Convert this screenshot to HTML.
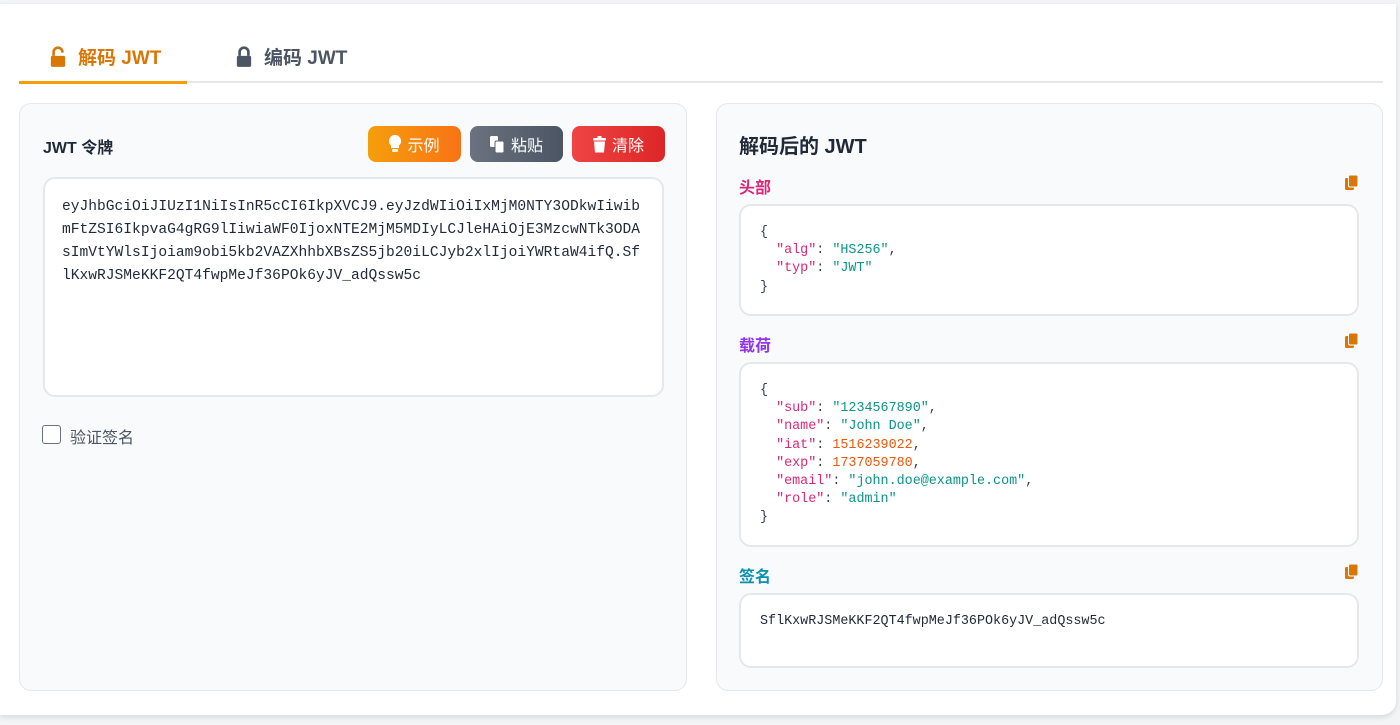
<!DOCTYPE html>
<html><head><meta charset="utf-8"><style>
*{box-sizing:border-box;margin:0;padding:0}
body{width:1400px;height:725px;background:#f3f4f6;font-family:"Liberation Sans","Noto Sans CJK SC",sans-serif;position:relative;overflow:hidden}
.wrap{position:absolute;left:0;top:4px;width:1396px;height:711px;background:#fff;border-radius:0 0 14px 0;box-shadow:0 2px 6px rgba(0,0,0,.12)}
.tabs{position:absolute;left:19px;top:81px;width:1364px;height:2px;background:#e5e7eb}
.tab{position:absolute;top:43px;font-size:19px;font-weight:bold;display:flex;align-items:center;gap:12px}
.ul{position:absolute;left:19px;top:81px;width:168px;height:3px;background:#f59e0b}
.panel{position:absolute;top:103px;height:588px;background:#f8fafc;border:1px solid #e5e7eb;border-radius:12px}
.btn{position:absolute;top:126px;height:36px;border-radius:8px;color:#fff;font-size:16px;display:flex;align-items:center;justify-content:center;gap:6px}
.ta{position:absolute;left:43px;top:177px;width:621px;height:220px;background:#fff;border:2px solid #e5e7eb;border-radius:12px;padding:17px 17px;font-family:"Liberation Mono",monospace;font-size:14.6px;line-height:23px;color:#1f2937;white-space:nowrap;letter-spacing:0}
.lab{position:absolute;left:739px;font-size:16px;font-weight:bold}
.cp{position:absolute;left:1345px}
.box{position:absolute;left:739px;width:620px;background:#fff;border:2px solid #e5e7eb;border-radius:12px;padding:18px 19px;font-family:"Liberation Mono",monospace;font-size:13.4px;line-height:18.2px;color:#374151;white-space:pre}
.k{color:#db2777}.s{color:#0d9488}.n{color:#ea580c}
</style></head><body>
<div class="wrap"></div>
<div class="tabs"></div><div class="ul"></div>
<div class="tab" style="left:50px;color:#d97706"><svg width="16" height="22" viewBox="0 0 14 20"><path d="M3 9V5.5a4 4 0 0 1 8 0V6" fill="none" stroke="#d97706" stroke-width="2.4"/><rect x="0.5" y="9" width="13" height="10" rx="1.5" fill="#d97706"/></svg>解码 JWT</div>
<div class="tab" style="left:236px;color:#4b5563"><svg width="16" height="22" viewBox="0 0 14 20"><path d="M3 9V5.5a4 4 0 0 1 8 0V9" fill="none" stroke="#4b5563" stroke-width="2.4"/><rect x="0.5" y="9" width="13" height="10" rx="1.5" fill="#4b5563"/></svg>编码 JWT</div>

<div class="panel" style="left:19px;width:668px"></div>
<div class="panel" style="left:716px;width:667px"></div>

<div style="position:absolute;left:43px;top:134px;font-size:16px;font-weight:bold;color:#1f2937">JWT 令牌</div>
<div class="btn" style="left:368px;width:93px;background:linear-gradient(90deg,#f59e0b,#f97316)"><svg width="12" height="18" viewBox="0 0 12 18"><path d="M6 0a6 6 0 0 0-4 10.5V13h8v-2.5A6 6 0 0 0 6 0z" fill="#fff"/><rect x="3" y="14" width="6" height="3" rx="1.2" fill="#fff"/></svg>示例</div>
<div class="btn" style="left:470px;width:93px;background:linear-gradient(90deg,#6b7280,#4b5563)"><svg width="15" height="17" viewBox="0 0 15 17"><rect x="0" y="0" width="8" height="11" rx="1.5" fill="#fff"/><rect x="5" y="5" width="9" height="12" rx="1.5" fill="#fff" stroke="#5b6270" stroke-width="1"/></svg>粘贴</div>
<div class="btn" style="left:572px;width:93px;background:linear-gradient(90deg,#ef4444,#dc2626)"><svg width="13" height="17" viewBox="0 0 13 17"><rect x="0" y="2" width="13" height="2.5" rx="1" fill="#fff"/><rect x="4.5" y="0" width="4" height="2" fill="#fff"/><path d="M1 5.5h11l-1 11H2z" fill="#fff"/></svg>清除</div>

<div class="ta">eyJhbGciOiJIUzI1NiIsInR5cCI6IkpXVCJ9.eyJzdWIiOiIxMjM0NTY3ODkwIiwib<br>mFtZSI6IkpvaG4gRG9lIiwiaWF0IjoxNTE2MjM5MDIyLCJleHAiOjE3MzcwNTk3ODA<br>sImVtYWlsIjoiam9obi5kb2VAZXhhbXBsZS5jb20iLCJyb2xlIjoiYWRtaW4ifQ.Sf<br>lKxwRJSMeKKF2QT4fwpMeJf36POk6yJV_adQssw5c</div>
<div style="position:absolute;left:42px;top:425px;width:19px;height:19px;border:1.5px solid #6b7280;border-radius:3px;background:#fff"></div>
<div style="position:absolute;left:70px;top:424px;font-size:16px;color:#4b5563">验证签名</div>

<div style="position:absolute;left:739px;top:130px;font-size:20px;font-weight:bold;color:#1f2937">解码后的 JWT</div>

<div class="lab" style="top:174px;color:#db2777">头部</div>
<svg class="cp" style="top:175px" width="13" height="15" viewBox="0 0 13 15"><rect x="0" y="3" width="9" height="12" rx="1.5" fill="#d97706"/><rect x="3.5" y="0" width="9.5" height="12" rx="1.5" fill="#d97706" stroke="#fff" stroke-width="1"/></svg>
<div class="box" style="top:204px;height:112px">{
  <span class="k">"alg"</span>: <span class="s">"HS256"</span>,
  <span class="k">"typ"</span>: <span class="s">"JWT"</span>
}</div>

<div class="lab" style="top:332px;color:#9333ea">载荷</div>
<svg class="cp" style="top:333px" width="13" height="15" viewBox="0 0 13 15"><rect x="0" y="3" width="9" height="12" rx="1.5" fill="#d97706"/><rect x="3.5" y="0" width="9.5" height="12" rx="1.5" fill="#d97706" stroke="#fff" stroke-width="1"/></svg>
<div class="box" style="top:362px;height:185px">{
  <span class="k">"sub"</span>: <span class="s">"1234567890"</span>,
  <span class="k">"name"</span>: <span class="s">"John Doe"</span>,
  <span class="k">"iat"</span>: <span class="n">1516239022</span>,
  <span class="k">"exp"</span>: <span class="n">1737059780</span>,
  <span class="k">"email"</span>: <span class="s">"john.doe@example.com"</span>,
  <span class="k">"role"</span>: <span class="s">"admin"</span>
}</div>

<div class="lab" style="top:563px;color:#0891b2">签名</div>
<svg class="cp" style="top:564px" width="13" height="15" viewBox="0 0 13 15"><rect x="0" y="3" width="9" height="12" rx="1.5" fill="#d97706"/><rect x="3.5" y="0" width="9.5" height="12" rx="1.5" fill="#d97706" stroke="#fff" stroke-width="1"/></svg>
<div class="box" style="top:593px;height:75px;color:#1f2937;padding-top:18px">SflKxwRJSMeKKF2QT4fwpMeJf36POk6yJV_adQssw5c</div>
</body></html>
